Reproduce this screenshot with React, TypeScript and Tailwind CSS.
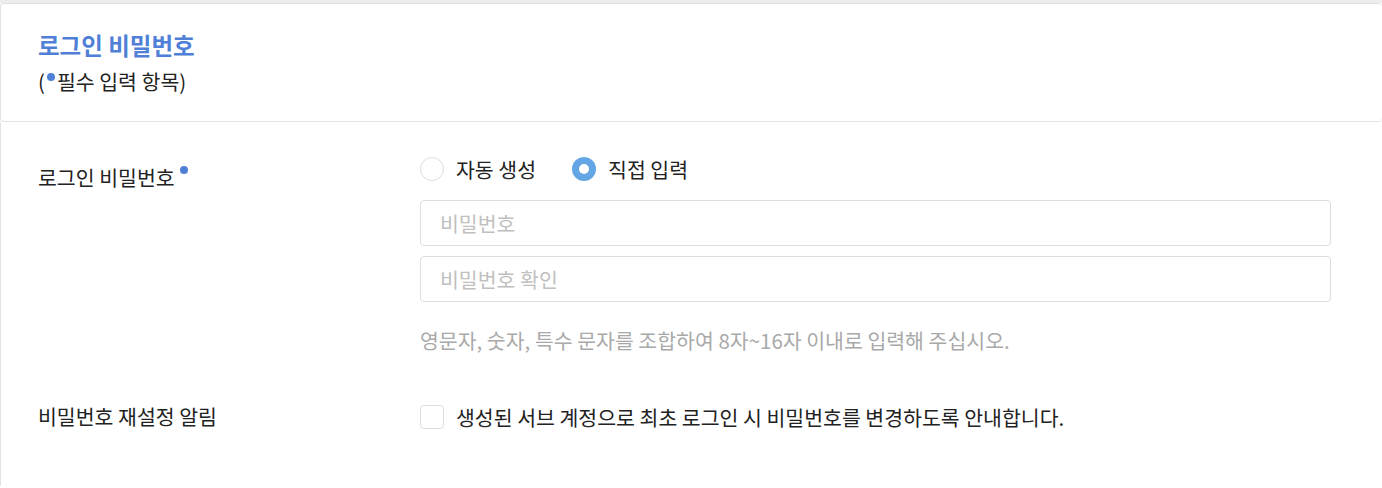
import React, { useState } from "react";

const FONT = { fontFamily: '"Noto Sans CJK KR", "Noto Sans", sans-serif' };

function RequiredDot({ className = "" }: { className?: string }) {
  return <span className={`inline-block h-[8px] w-[8px] shrink-0 rounded-full bg-[#4f7fd6] ${className}`} />;
}

function Radio({ checked, label, onClick }: { checked: boolean; label: string; onClick: () => void }) {
  return (
    <button type="button" onClick={onClick} className="flex items-center gap-[12px]">
      {checked ? (
        <span className="flex h-[24px] w-[24px] items-center justify-center rounded-full bg-[#64a6e4]">
          <span className="h-[10px] w-[10px] rounded-full bg-white" />
        </span>
      ) : (
        <span className="h-[24px] w-[24px] rounded-full border border-[#dddddd] bg-white" />
      )}
      <span className="text-[20.5px] leading-[24px] text-[#222]">{label}</span>
    </button>
  );
}

export default function App() {
  const [mode, setMode] = useState<"auto" | "manual">("manual");
  const [notify, setNotify] = useState(false);

  return (
    <div className="min-h-[488px] bg-white pt-[3px]" style={FONT}>
      <div className="absolute inset-x-0 top-0 h-[3px] bg-[#ededed]" />
      <div className="h-[119px] rounded-[4px] border border-r-0 border-[#e2e2e2] bg-white px-[37px] pt-[27px]">
        <h1 className="text-[23.5px] font-bold leading-[28px] text-[#4f7fd6]">로그인 비밀번호</h1>
        <p className="mt-[8px] flex items-start text-[20.5px] leading-[28px] text-[#222]">
          (<RequiredDot className="mx-[2px] mt-[6px]" />필수 입력 항목)
        </p>
      </div>

      <div className="h-[364px] border-l border-[#e2e2e2] pl-[37px] pr-[51px] pt-[35px]">
        <div className="flex">
          <div className="flex w-[382px] shrink-0 items-start pt-[8px]">
            <span className="text-[20.5px] leading-[24px] text-[#222]">로그인 비밀번호</span>
            <RequiredDot className="ml-[5px] mt-[1px]" />
          </div>
          <div className="flex flex-1 flex-col">
            <div className="flex gap-[36px]">
              <Radio checked={mode === "auto"} label="자동 생성" onClick={() => setMode("auto")} />
              <Radio checked={mode === "manual"} label="직접 입력" onClick={() => setMode("manual")} />
            </div>
            <input
              type="password"
              placeholder="비밀번호"
              className="mt-[19px] h-[46px] w-full rounded-[4px] border border-[#dedede] pl-[19px] text-[20.5px] outline-none placeholder:text-[#c0c0c0]"
            />
            <input
              type="password"
              placeholder="비밀번호 확인"
              className="mt-[10px] h-[46px] w-full rounded-[4px] border border-[#dedede] pl-[19px] text-[20.5px] outline-none placeholder:text-[#c0c0c0]"
            />
            <p className="mt-[26px] text-[20.5px] leading-[24px] text-[#a9a9a9]">
              영문자, 숫자, 특수 문자를 조합하여 8자~16자 이내로 입력해 주십시오.
            </p>
          </div>
        </div>

        <div className="mt-[51px] flex">
          <div className="w-[382px] shrink-0 pt-[1px]">
            <span className="text-[20.5px] leading-[24px] text-[#222]">비밀번호 재설정 알림</span>
          </div>
          <button type="button" onClick={() => setNotify(!notify)} className="flex items-center gap-[12px]">
            <span
              className={`flex h-[24px] w-[24px] items-center justify-center rounded-[4px] border ${
                notify ? "border-[#64a6e4] bg-[#64a6e4]" : "border-[#dddddd] bg-white"
              }`}
            >
              {notify && (
                <svg width="14" height="14" viewBox="0 0 14 14" fill="none">
                  <path d="M2.5 7.2l3 3 6-6.4" stroke="white" strokeWidth="2" />
                </svg>
              )}
            </span>
            <span className="text-[20.5px] leading-[24px] text-[#222]">
              생성된 서브 계정으로 최초 로그인 시 비밀번호를 변경하도록 안내합니다.
            </span>
          </button>
        </div>
      </div>
    </div>
  );
}
